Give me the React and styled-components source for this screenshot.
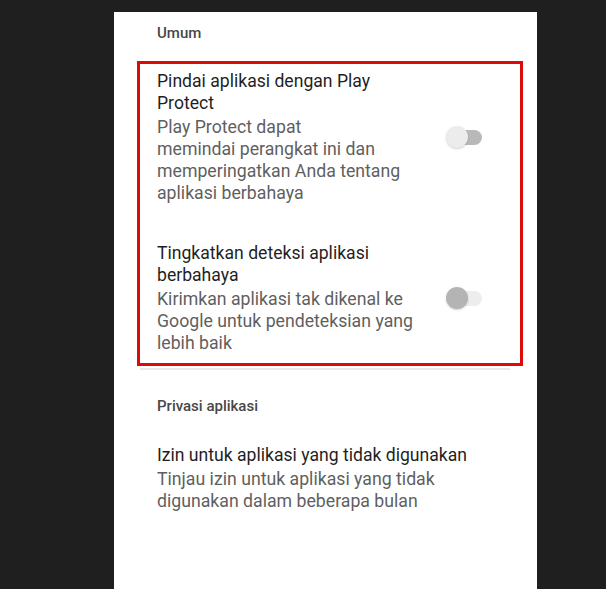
import React from 'react'
import styled, { createGlobalStyle } from 'styled-components'

const GlobalStyle = createGlobalStyle`
    html, body {
        margin: 0;
        padding: 0;
        background: #1f1f1f;
    }
    body {
        font-family: Roboto, "Noto Sans", Arial, sans-serif;
    }
`

const Screen = styled.div`
    width: 606px;
    height: 589px;
    overflow: hidden;
    background: #1f1f1f;
    display: flex;
    justify-content: flex-start;
`

const Panel = styled.div`
    margin: 12px 0 0 114px;
    width: 423px;
    height: 577px;
    background: #ffffff;
    padding-top: 11px;
    box-sizing: border-box;
`

const SectionTitle = styled.div`
    font-size: 15px;
    font-weight: 500;
    line-height: 20px;
    color: #474747;
    padding-left: 43px;
    margin-bottom: ${(props) => props.gap || 18}px;
`

const Highlight = styled.div`
    margin: 0 14px 0 23px;
    border: 3px solid #dd0a0a;
    padding: 6px 0 9px 17px;
    display: flex;
    flex-direction: column;
    gap: 38px;
`

const Row = styled.div`
    display: flex;
    align-items: center;
    padding-left: ${(props) => props.indent || 0}px;
`

const Texts = styled.div`
    flex: 1;
`

const Title = styled.div`
    font-size: 17.6px;
    line-height: 22px;
    color: #1f1f1f;
    margin-bottom: 2px;
`

const Desc = styled.div`
    font-size: 17.7px;
    line-height: 22px;
    color: #5f5f5f;
`

const Toggle = styled.div`
    position: relative;
    width: 36px;
    height: 22px;
    margin-right: 38px;
    flex-shrink: 0;
`

const Track = styled.div`
    position: absolute;
    left: 6px;
    right: 0;
    top: 4px;
    height: 15px;
    border-radius: 8px;
    background: ${(props) => (props.dim ? '#ededed' : '#b9b9b9')};
`

const Thumb = styled.div`
    position: absolute;
    left: 0;
    top: 0;
    width: 22px;
    height: 22px;
    border-radius: 50%;
    background: ${(props) => (props.dim ? '#b4b4b4' : '#ececec')};
    box-shadow: 0 1px 2px rgba(0, 0, 0, 0.18);
`

const Divider = styled.div`
    margin: 2px 27px 26px 26px;
    height: 2px;
    background: #e9e9e9;
`

const Lines = ({ lines }) => lines.map((line, i) => <div key={i}>{line}</div>)

const Switch = ({ dim }) => (
    <Toggle>
        <Track dim={dim} />
        <Thumb dim={dim} />
    </Toggle>
)

const App = () => (
    <>
        <GlobalStyle />
        <Screen>
            <Panel>
                <SectionTitle gap={18}>Umum</SectionTitle>
                <Highlight>
                    <Row>
                        <Texts>
                            <Title>
                                <Lines lines={['Pindai aplikasi dengan Play', 'Protect']} />
                            </Title>
                            <Desc>
                                <Lines
                                    lines={[
                                        'Play Protect dapat',
                                        'memindai perangkat ini dan',
                                        'memperingatkan Anda tentang',
                                        'aplikasi berbahaya',
                                    ]}
                                />
                            </Desc>
                        </Texts>
                        <Switch />
                    </Row>
                    <Row>
                        <Texts>
                            <Title>
                                <Lines lines={['Tingkatkan deteksi aplikasi', 'berbahaya']} />
                            </Title>
                            <Desc>
                                <Lines
                                    lines={[
                                        'Kirimkan aplikasi tak dikenal ke',
                                        'Google untuk pendeteksian yang',
                                        'lebih baik',
                                    ]}
                                />
                            </Desc>
                        </Texts>
                        <Switch dim />
                    </Row>
                </Highlight>
                <Divider />
                <SectionTitle gap={28}>Privasi aplikasi</SectionTitle>
                <Row indent={43}>
                    <Texts>
                        <Title>Izin untuk aplikasi yang tidak digunakan</Title>
                        <Desc>
                            <Lines
                                lines={[
                                    'Tinjau izin untuk aplikasi yang tidak',
                                    'digunakan dalam beberapa bulan',
                                ]}
                            />
                        </Desc>
                    </Texts>
                </Row>
            </Panel>
        </Screen>
    </>
)

export default App
